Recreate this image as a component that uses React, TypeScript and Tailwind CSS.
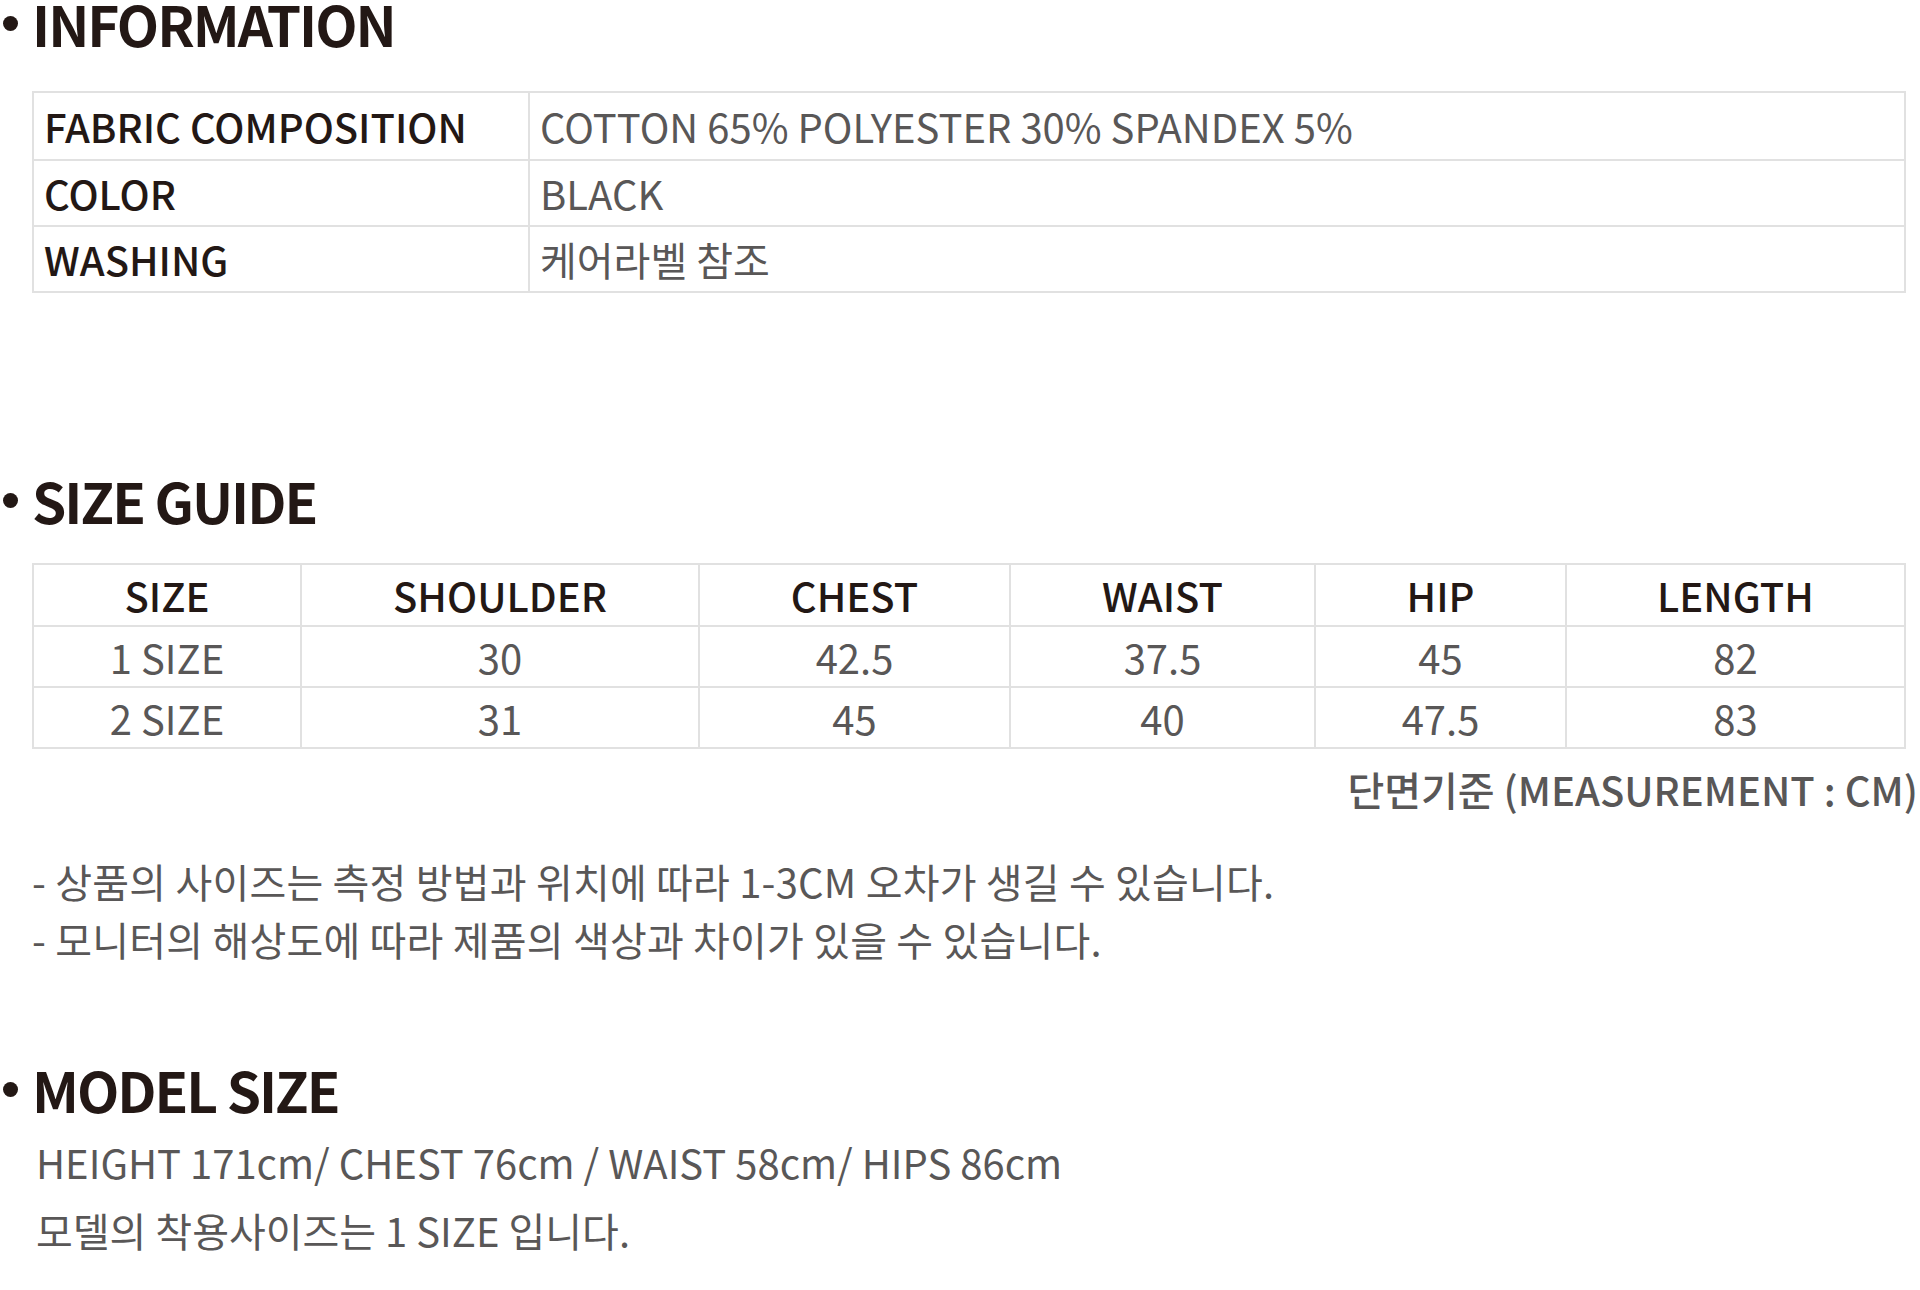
import React from "react";

const font = { fontFamily: '"Noto Sans CJK KR", "Noto Sans", sans-serif' };

function Heading({ title, className }: { title: string; className?: string }) {
    return <div className={"flex items-center leading-none text-[#231815] " + (className ?? "")}>
        <span className="w-[15px] h-[15px] rounded-full bg-[#231815] ml-[3px] mr-[14px]"></span>
        <span className="text-[55px] font-bold tracking-[-2px]">{title}</span>
    </div>
}

const info = [
    ["FABRIC COMPOSITION", "COTTON 65% POLYESTER 30% SPANDEX 5%"],
    ["COLOR", "BLACK"],
    ["WASHING", "케어라벨 참조"],
];

const sizeHead = ["SIZE", "SHOULDER", "CHEST", "WAIST", "HIP", "LENGTH"];
const sizeRows = [
    ["1 SIZE", "30", "42.5", "37.5", "45", "82"],
    ["2 SIZE", "31", "45", "40", "47.5", "83"],
];
const colW = ["w-[268px]", "w-[398px]", "w-[311px]", "w-[305px]", "w-[251px]", "flex-1"];

export default function App() {
    return <div className="w-[1920px] h-[1290px] bg-white overflow-hidden" style={font}>
        <Heading title="INFORMATION" className="mt-[-4px]" />

        <div className="ml-[32px] w-[1874px] mt-[40px] border-2 border-[#e1e1e1]">
            {info.map((row, i) => (
                <div key={row[0]} className={"flex h-[66px] " + (i > 0 ? "border-t-2 border-[#e1e1e1]" : "")}>
                    <div className="w-[496px] border-r-2 border-[#e1e1e1] flex items-center pl-[10px] text-[40px] font-medium text-[#231815]">{row[0]}</div>
                    <div className="flex-1 flex items-center pl-[10px] text-[40px] text-[#595757]">{row[1]}</div>
                </div>
            ))}
        </div>

        <Heading title="SIZE GUIDE" className="mt-[180px]" />

        <div className="ml-[32px] w-[1874px] mt-[35px] border-2 border-[#e1e1e1]">
            <div className="flex h-[60px]">
                {sizeHead.map((h, i) => (
                    <div key={h} className={colW[i] + " flex items-center justify-center text-[40px] font-medium text-[#231815] " + (i < 5 ? "border-r-2 border-[#e1e1e1]" : "")}>{h}</div>
                ))}
            </div>
            {sizeRows.map((row) => (
                <div key={row[0]} className="flex h-[61px] border-t-2 border-[#e1e1e1]">
                    {row.map((c, i) => (
                        <div key={i} className={colW[i] + " flex items-center justify-center text-[40px] text-[#595757] " + (i < 5 ? "border-r-2 border-[#e1e1e1]" : "")}>{c}</div>
                    ))}
                </div>
            ))}
        </div>

        <div className="mt-[20px] pr-[2px] text-right text-[40px] leading-none font-medium text-[#595757]">단면기준 (MEASUREMENT : CM)</div>

        <div className="mt-[43px] ml-[32px] text-[40px] leading-[58px] tracking-[0.2px] text-[#595757]">
            <p>- 상품의 사이즈는 측정 방법과 위치에 따라 1-3CM 오차가 생길 수 있습니다.</p>
            <p>- 모니터의 해상도에 따라 제품의 색상과 차이가 있을 수 있습니다.</p>
        </div>

        <Heading title="MODEL SIZE" className="mt-[94px]" />

        <div className="mt-[11px] ml-[36px] text-[40px] leading-[68px] text-[#595757]">
            <p>HEIGHT 171cm/ CHEST 76cm / WAIST 58cm/ HIPS 86cm</p>
            <p>모델의 착용사이즈는 1 SIZE 입니다.</p>
        </div>
    </div>
}
